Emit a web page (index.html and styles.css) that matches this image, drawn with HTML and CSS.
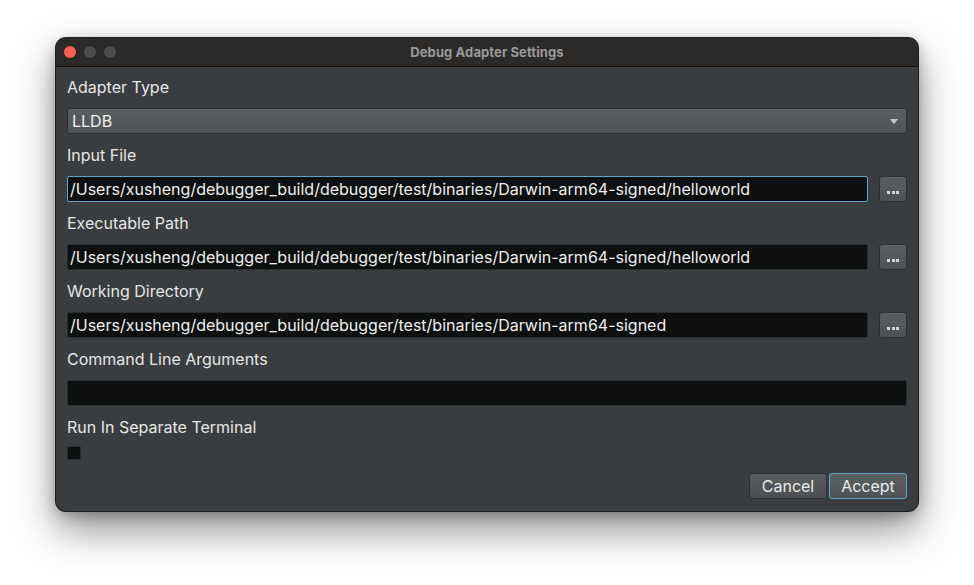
FILE: index.html
```html
<!DOCTYPE html>
<html>
<head>
<meta charset="utf-8">
<link rel="stylesheet" href="styles.css">
</head>
<body>
<div class="window">
  <div class="titlebar">
    <div class="lights">
      <span class="light red"></span>
      <span class="light grey"></span>
      <span class="light grey"></span>
    </div>
    <div class="title">Debug Adapter Settings</div>
  </div>
  <div class="content">
    <div class="label">Adapter Type</div>
    <div class="select"><span>LLDB</span><span class="caret"></span></div>
    <div class="label">Input File</div>
    <div class="row">
      <div class="input focus">/Users/xusheng/debugger_build/debugger/test/binaries/Darwin-arm64-signed/helloworld</div>
      <div class="browse"><span></span><span></span><span></span></div>
    </div>
    <div class="label">Executable Path</div>
    <div class="row">
      <div class="input">/Users/xusheng/debugger_build/debugger/test/binaries/Darwin-arm64-signed/helloworld</div>
      <div class="browse"><span></span><span></span><span></span></div>
    </div>
    <div class="label">Working Directory</div>
    <div class="row">
      <div class="input">/Users/xusheng/debugger_build/debugger/test/binaries/Darwin-arm64-signed</div>
      <div class="browse"><span></span><span></span><span></span></div>
    </div>
    <div class="label">Command Line Arguments</div>
    <div class="row">
      <div class="input"></div>
    </div>
    <div class="label">Run In Separate Terminal</div>
    <div class="checkbox"></div>
    <div class="buttons">
      <div class="btn">Cancel</div>
      <div class="btn default">Accept</div>
    </div>
  </div>
</div>
</body>
</html>
```
FILE: styles.css
```css
html, body {
  margin: 0;
  padding: 0;
  background: #ffffff;
  width: 974px;
  height: 585px;
  overflow: hidden;
}
body {
  font-family: Inter, "Liberation Sans", sans-serif;
  padding: 38px 0 0 56px;
  box-sizing: border-box;
}
.window {
  width: 862px;
  height: 473px;
  border-radius: 10px;
  background: #3a3d3f;
  box-shadow: 0 0 0 1px #1f1f1f, 0 18px 40px rgba(0,0,0,0.45), 0 4px 14px rgba(0,0,0,0.25);
  overflow: hidden;
  display: flex;
  flex-direction: column;
}
.titlebar {
  height: 28px;
  background: #2b2a29;
  border-bottom: 1px solid #111;
  display: flex;
  align-items: center;
  position: relative;
  flex: none;
}
.lights {
  display: flex;
  gap: 8px;
  padding-left: 8px;
}
.light {
  width: 12px;
  height: 12px;
  border-radius: 50%;
  display: block;
}
.red { background: #fe5f57; }
.grey { background: #4d4c4b; }
.title {
  position: absolute;
  left: 0; right: 0;
  text-align: center;
  color: #9b9a99;
  font-size: 13px;
  font-weight: 700;
  letter-spacing: 0.1px;
}
.content {
  padding: 10px 11px 12px 11px;
  display: flex;
  flex-direction: column;
  flex: 1;
}
.label {
  height: 20px;
  line-height: 20px;
  font-size: 16px;
  color: #e6e6e6;
  margin-bottom: 11px;
}
.select {
  height: 26px;
  box-sizing: border-box;
  border: 1px solid #2e3032;
  border-radius: 3px;
  background: linear-gradient(#5c5f61, #505355);
  color: #efefef;
  font-size: 16px;
  display: flex;
  align-items: center;
  justify-content: space-between;
  padding: 0 8px 0 4px;
  margin-bottom: 11px;
}
.caret {
  width: 0; height: 0;
  border-left: 4px solid transparent;
  border-right: 4px solid transparent;
  border-top: 5px solid #c8c8c8;
}
.row {
  display: flex;
  gap: 11px;
  margin-bottom: 11px;
}
.input {
  flex: 1;
  height: 26px;
  box-sizing: border-box;
  background: #0e1010;
  border: 1px solid #2a2c2d;
  border-radius: 2px;
  color: #efefef;
  font-size: 16px;
  line-height: 24px;
  padding-left: 2px;
  white-space: nowrap;
  overflow: hidden;
}
.input.focus {
  border-color: #5ba6c9;
}
.browse {
  width: 28px;
  height: 26px;
  box-sizing: border-box;
  border: 1px solid #2e3032;
  border-radius: 3px;
  background: linear-gradient(#5c5f61, #4e5153);
  display: flex;
  align-items: center;
  justify-content: center;
  gap: 1.5px;
  padding-top: 6px;
}
.browse span {
  width: 3px;
  height: 3px;
  background: #d4d4d4;
  display: block;
}
.checkbox {
  width: 14px;
  height: 14px;
  box-sizing: border-box;
  background: #0e1010;
  border: 1px solid #2c2f30;
  margin-top: -2px;
}
.buttons {
  margin-top: auto;
  display: flex;
  justify-content: flex-end;
  gap: 2px;
}
.btn {
  width: 78px;
  height: 26px;
  box-sizing: border-box;
  border: 1px solid #2e3032;
  border-radius: 3px;
  background: linear-gradient(#5a5d5f, #4c4f51);
  color: #e9e9e9;
  font-size: 16px;
  display: flex;
  align-items: center;
  justify-content: center;
}
.btn.default {
  border-color: #5ba6c9;
  background: linear-gradient(#5b6063, #4d5255);
}
```
